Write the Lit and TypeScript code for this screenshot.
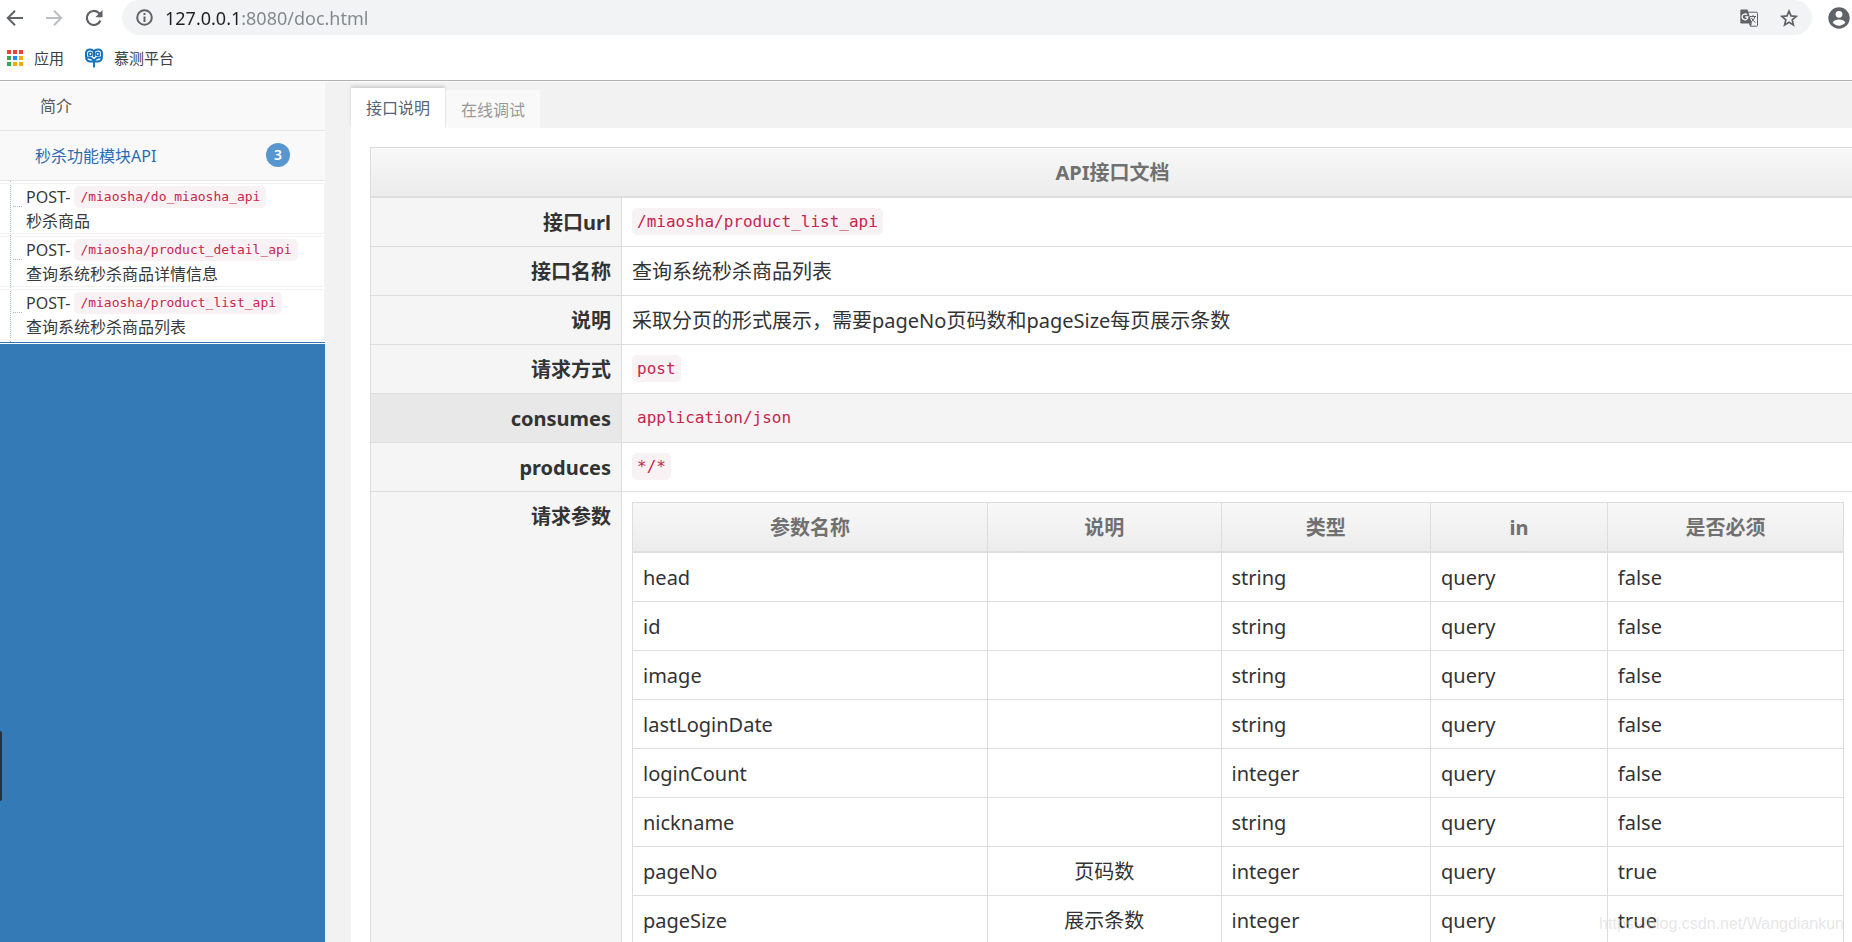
import { LitElement, html, css } from "lit";
import { customElement, state } from "lit/decorators.js";

interface Endpoint {
  method: string;
  path: string;
  title: string;
}

interface Param {
  name: string;
  desc: string;
  type: string;
  required: boolean;
}

const endpoints: Endpoint[] = [
  { method: "POST", path: "/miaosha/do_miaosha_api", title: "秒杀商品" },
  { method: "POST", path: "/miaosha/product_detail_api", title: "查询系统秒杀商品详情信息" },
  { method: "POST", path: "/miaosha/product_list_api", title: "查询系统秒杀商品列表" },
];

const params: Param[] = [
  { name: "head", desc: "", type: "string", required: false },
  { name: "id", desc: "", type: "string", required: false },
  { name: "image", desc: "", type: "string", required: false },
  { name: "lastLoginDate", desc: "", type: "string", required: false },
  { name: "loginCount", desc: "", type: "integer", required: false },
  { name: "nickname", desc: "", type: "string", required: false },
  { name: "pageNo", desc: "页码数", type: "integer", required: true },
  { name: "pageSize", desc: "展示条数", type: "integer", required: true },
];

@customElement("browser-bar")
class BrowserBar extends LitElement {
  static styles = css`
    :host {
      display: block;
      background: #fff;
      border-bottom: 1px solid #b0b0b0;
    }
    .tools {
      display: flex;
      align-items: center;
      height: 35px;
    }
    button {
      display: flex;
      align-items: center;
      justify-content: center;
      padding: 0;
      border: 0;
      background: none;
      color: #5f6368;
    }
    .nav {
      display: flex;
      width: 122px;
      padding-right: 8px;
      box-sizing: border-box;
    }
    .nav button {
      width: 40px;
      height: 35px;
    }
    .nav button:first-child {
      width: 34px;
      padding-right: 5px;
    }
    .nav button:disabled {
      color: #bcbec1;
    }
    .address {
      flex: 1;
      display: flex;
      align-items: center;
      height: 35px;
      padding: 0 14px;
      border-radius: 18px;
      background: #f1f3f4;
    }
    .address input {
      flex: 1;
      min-width: 0;
      height: 34px;
      margin-left: 8px;
      padding: 0 4px;
      border: 0;
      outline: 0;
      font: 18px "Noto Sans", sans-serif;
      color: transparent;
      background: linear-gradient(90deg, #202124 80px, #80868b 80px);
      -webkit-background-clip: text;
      background-clip: text;
    }
    .end {
      display: flex;
      gap: 22px;
    }
    .user {
      width: 40px;
      padding-left: 14px;
    }
    .marks {
      display: flex;
      align-items: center;
      gap: 20px;
      height: 45px;
      padding-left: 6px;
    }
    .marks a {
      display: flex;
      align-items: center;
      gap: 10px;
      font: 15px "Noto Sans CJK SC", sans-serif;
      line-height: 20px;
      color: #3c4043;
      text-decoration: none;
    }
  `;

  render() {
    return html`
      <div class="tools">
        <div class="nav">
          <button aria-label="Back">
            <svg width="18" height="18" viewBox="0 0 18 18" fill="none" stroke="currentColor" stroke-width="2"><path d="M17 9H2.500M9 1.800 1.800 9 9 16.200" /></svg>
          </button>
          <button aria-label="Forward" disabled>
            <svg width="18" height="18" viewBox="0 0 18 18" fill="none" stroke="currentColor" stroke-width="2"><path d="M1 9h14.500M9 1.800 16.200 9 9 16.200" /></svg>
          </button>
          <button aria-label="Reload">
            <svg width="18" height="18" viewBox="0 0 18 18"><path d="M15.400 11.500A7 7 0 1 1 13.600 3.800L15.500 5.500" fill="none" stroke="currentColor" stroke-width="2.200" /><path d="M17.500 1v7.200h-7.200z" fill="currentColor" /></svg>
          </button>
        </div>
        <div class="address">
          <button aria-label="Site information">
            <svg width="17" height="17" viewBox="0 0 17 17" fill="none" stroke="currentColor" stroke-width="2"><circle cx="8.500" cy="8.500" r="7.300" /><path d="M8.500 7.500V13M8.500 4v2" /></svg>
          </button>
          <input aria-label="Address" value="127.0.0.1:8080/doc.html" spellcheck="false" />
          <div class="end">
            <button aria-label="Translate">
              <svg width="18" height="18" viewBox="0 0 18 18">
                <path d="M7 3.200h9.500q1 0 1 1v12q0 1-1 1H10.500L7 3.200" fill="none" stroke="#5f6368" />
                <path d="M1.500.5h6l4.500 14h-10.500q-1.200 0-1.200-1.200V1.700Q.3.500 1.500.5z" fill="#5f6368" />
                <path d="M9 14.500h3l-1.500 3z" fill="#5f6368" />
                <path d="M7 5.800A2.900 2.900 0 1 0 7.900 8H5.300" fill="none" stroke="#fff" stroke-width="1.300" />
                <path d="M9.800 7.500H16M13 6v1.500M15 7.500q-.8 3.600-4 5.500M11.500 9q1.500 3 4 4.500" fill="none" stroke="#5f6368" />
              </svg>
            </button>
            <button aria-label="Bookmark this page">
              <svg width="18" height="18" viewBox="0 0 18 18" fill="none" stroke="currentColor" stroke-width="1.700"><path d="m9 2.200 2 4.700 5.200.5-4 3.500 1.200 5L9 13.200l-4.400 2.700 1.200-5-4-3.500 5.200-.5z" /></svg>
            </button>
          </div>
        </div>
        <button class="user" aria-label="Profile">
          <svg width="22" height="22" viewBox="0 0 22 22"><circle cx="11" cy="11" r="10.700" fill="currentColor" /><circle cx="11" cy="7.300" r="3.400" fill="#fff" /><path d="M4.600 15.600C5.500 13.500 8.500 12.500 11 12.500s5.500 1 6.400 3.100C16 17.700 13.500 18.700 11 18.700S6 17.700 4.600 15.600z" fill="#fff" /></svg>
        </button>
      </div>
      <nav class="marks" aria-label="书签">
        <a href="#apps">
          <svg width="18" height="18" viewBox="0 0 18 18">
            <path d="M1 1h4v4H1zM7 1h4v4H7zM13 1h4v4h-4z" fill="#ea4335" />
            <path d="M1 7h4v4H1zM1 13h4v4H1z" fill="#34a853" />
            <path d="M7 7h4v4H7z" fill="#1a8cff" />
            <path d="M7 13h4v4H7zM13 7h4v4h-4zM13 13h4v4h-4z" fill="#fbaa05" />
          </svg>
          应用
        </a>
        <a href="#mooctest">
          <svg width="20" height="20" viewBox="0 0 20 20" fill="none" stroke="#1273bd">
            <path d="M10 9V3.500Q8.500 1.300 5.500 1.600 2 2 2 5.500v4M10 3.500q1.500-2.200 4.500-1.900Q18 2 18 5.500v4" stroke-width="2" />
            <path d="M1.500 9.500H5q2.500 0 5 3 2.500-3 5-3h3.500M2 9.500q.6 4 4.500 4h7q3.900 0 4.500-4M10 12v7.500" stroke-width="1.900" />
            <circle cx="6.300" cy="6" r="1.700" stroke-width="1.600" />
            <circle cx="13.700" cy="6" r="1.700" stroke-width="1.600" />
          </svg>
          慕测平台
        </a>
      </nav>
    `;
  }
}

@customElement("api-menu")
class ApiMenu extends LitElement {
  static styles = css`
    :host {
      display: block;
      background: #337ab7;
      font: 16px "Noto Sans", "Noto Sans CJK SC", sans-serif;
      position: relative;
    }
    a {
      color: inherit;
      text-decoration: none;
    }
    .top {
      display: flex;
      align-items: center;
      height: 46px;
      padding: 0 35px 2px;
      border-bottom: 1px solid #e5e5e5;
      background: #f9f9f9;
      color: #585858;
    }
    .intro {
      padding-left: 40px;
    }
    .group {
      justify-content: space-between;
      height: 47px;
      color: #2b6cb3;
    }
    .badge {
      width: 24px;
      border-radius: 12px;
      background: #5896cf;
      color: #fff;
      font-size: 14px;
      font-weight: 600;
      line-height: 24px;
      text-align: center;
    }
    ul {
      display: grid;
      gap: 2px;
      position: relative;
      margin: 0;
      padding: 2px 0;
      list-style: none;
      background: #fff;
      border-bottom: 1px solid #337ab7;
      box-shadow: 0 1px 0 #fff;
    }
    ul::before {
      content: "";
      position: absolute;
      top: 0;
      bottom: 0;
      left: 10px;
      border-left: 1px dotted #9dbdd6;
    }
    li {
      position: relative;
      padding: 1px 0 0 26px;
      border: solid #f2f2f2;
      border-width: 1px 1px 1px 0;
      line-height: 24px;
      color: #393939;
    }
    li::before {
      content: "";
      position: absolute;
      top: 22px;
      left: 13px;
      width: 9px;
      border-top: 1px dotted #9dbdd6;
    }
    li a {
      display: block;
    }
    .line {
      display: flex;
      align-items: center;
      gap: 4px;
    }
    code {
      padding: 0 6px;
      border-radius: 5px;
      background: #f9f2f4;
      color: #c7254e;
      font: 13px "DejaVu Sans Mono", monospace;
      line-height: 22px;
    }
    .handle {
      position: absolute;
      left: 0;
      top: calc(78% - 22px);
      width: 2px;
      height: 70px;
      padding: 0;
      border: 0;
      border-radius: 0 2px 2px 0;
      background: #26303f;
    }
  `;

  render() {
    return html`
      <nav aria-label="接口">
        <a class="top intro" href="#intro">简介</a>
        <a class="top group" href="#seckill">秒杀功能模块API <span class="badge">${endpoints.length}</span></a>
        <ul>
          ${endpoints.map(
            (e) => html`<li>
              <a href="#${e.path}"><span class="line"><span>${e.method}-</span><code>${e.path}</code></span>${e.title}</a>
            </li>`
          )}
        </ul>
      </nav>
      <button class="handle" aria-label="展开"></button>
    `;
  }
}

@customElement("api-doc")
class ApiDoc extends LitElement {
  static styles = css`
    :host {
      display: block;
      min-width: 0;
      overflow: hidden;
      padding: 6px 0 0 26px;
      background: #f2f2f2;
      font: 20px "Noto Sans", "Noto Sans CJK SC", sans-serif;
      color: #333;
    }
    .tabs {
      display: flex;
      align-items: flex-end;
      gap: 1px;
    }
    .tabs button {
      height: 38px;
      padding: 0 15px;
      border: 0;
      background: #f9f9f9;
      color: #999;
      font: 16px "Noto Sans CJK SC", sans-serif;
    }
    .tabs .on {
      height: 40px;
      padding-bottom: 2px;
      background: #fff;
      color: #576373;
      box-shadow: 0 -2px 3px 0 rgba(0, 0, 0, 0.15);
    }
    .panel {
      position: relative;
      min-height: 100vh;
      padding: 19px 0 0 19px;
      background: #fff;
    }
    /* the sheet runs under the right edge of the window */
    .sheet {
      width: calc(100% + 3px);
    }
    table {
      width: 100%;
      border: solid #ddd;
      border-width: 1px 0 0 1px;
      border-spacing: 0;
      table-layout: fixed;
    }
    th,
    td {
      padding: 11px 10px 9px;
      border: solid #ddd;
      border-width: 0 1px 1px 0;
      line-height: 28px;
      text-align: left;
      vertical-align: top;
    }
    .title,
    .head {
      border-bottom-width: 2px;
      background: linear-gradient(#f8f8f8, #ececec);
      color: #707070;
      text-align: center;
    }
    .key {
      background: #f5f5f5;
      text-align: right;
    }
    .wrap {
      padding: 10px;
    }
    .hover .key {
      background: #e8e8e8;
    }
    .hover td {
      background: #f4f4f4;
    }
    .code {
      padding: 10px;
    }
    code {
      display: block;
      width: fit-content;
      margin-bottom: 1px;
      padding: 0 5px;
      border-radius: 5px;
      background: #f9f2f4;
      color: #c7254e;
      font: 16px "DejaVu Sans Mono", monospace;
      line-height: 27px;
    }
    .hover code {
      background: #f5f3f4;
    }
    .params td:nth-child(2) {
      text-align: center;
    }
  `;

  @state() private tab = 0;

  private row(key: string, value: string, code = false, hover = false) {
    return html`<tr class=${hover ? "hover" : ""}>
      <th class="key" scope="row">${key}</th>
      ${code ? html`<td class="code"><code>${value}</code></td>` : html`<td>${value}</td>`}
    </tr>`;
  }

  render() {
    return html`
      <div class="tabs" role="tablist">
        ${["接口说明", "在线调试"].map(
          (t, i) => html`<button
            role="tab"
            class=${i === this.tab ? "on" : ""}
            aria-selected=${i === this.tab}
            @click=${() => (this.tab = i)}
          >${t}</button>`
        )}
      </div>
      <div class="panel">
        <table class="sheet">
          <colgroup><col style="width:251px" /><col /></colgroup>
          <thead>
            <tr><th class="title" colspan="2">API接口文档</th></tr>
          </thead>
          <tbody>
            ${this.row("接口url", "/miaosha/product_list_api", true)}
            ${this.row("接口名称", "查询系统秒杀商品列表")}
            ${this.row("说明", "采取分页的形式展示，需要pageNo页码数和pageSize每页展示条数")}
            ${this.row("请求方式", "post", true)}
            ${this.row("consumes", "application/json", true, true)}
            ${this.row("produces", "*/*", true)}
            <tr>
              <th class="key" scope="row">请求参数</th>
              <td class="wrap">
                <table class="params">
                  <colgroup>
                    ${[29.3, 19.3, 17.3, 14.6, 19.5].map((w) => html`<col style="width:${w}%" />`)}
                  </colgroup>
                  <thead>
                    <tr>${["参数名称", "说明", "类型", "in", "是否必须"].map((h) => html`<th class="head">${h}</th>`)}</tr>
                  </thead>
                  <tbody>
                    ${params.map(
                      (p) => html`<tr>
                        <td>${p.name}</td><td>${p.desc}</td><td>${p.type}</td><td>query</td><td>${p.required}</td>
                      </tr>`
                    )}
                  </tbody>
                </table>
              </td>
            </tr>
          </tbody>
        </table>
      </div>
    `;
  }
}

@customElement("app-root")
class AppRoot extends LitElement {
  static styles = css`
    :host {
      display: flex;
      flex-direction: column;
      position: relative;
      height: 100vh;
      overflow: hidden;
      background: #fff;
    }
    .body {
      flex: 1;
      display: grid;
      grid-template-columns: 325px 1fr;
      min-height: 0;
      padding-top: 1px;
    }
    .mark {
      position: absolute;
      right: 8px;
      bottom: 8px;
      font: 16px "Liberation Sans", Arial, sans-serif;
      line-height: 20px;
      color: rgba(200, 200, 200, 0.45);
      pointer-events: none;
    }
  `;

  render() {
    return html`
      <browser-bar></browser-bar>
      <div class="body">
        <api-menu></api-menu>
        <api-doc></api-doc>
      </div>
      <div class="mark">https://blog.csdn.net/Wangdiankun</div>
    `;
  }
}
